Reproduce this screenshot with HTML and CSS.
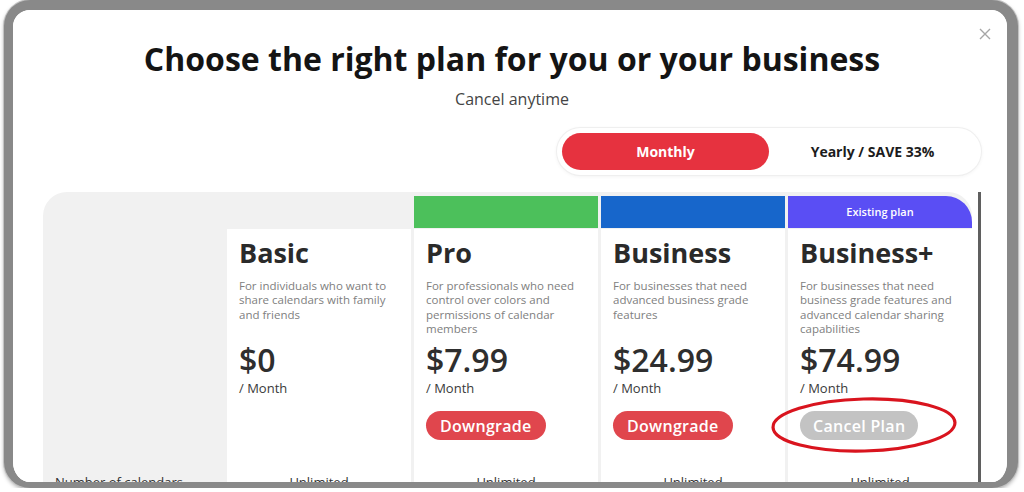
FILE: index.html
```html
<!DOCTYPE html>
<html>
<head>
<meta charset="utf-8">
<link rel="stylesheet" href="styles.css">
</head>
<body>
<div class="frame">
  <div class="modal">
    <button class="close" aria-label="Close">
      <svg width="12" height="12" viewBox="0 0 12 12"><path d="M1 1L11 11M11 1L1 11" stroke="#a6a6a6" stroke-width="1.4" fill="none"/></svg>
    </button>
    <h1 class="title">Choose the right plan for you or your business</h1>
    <p class="subtitle">Cancel anytime</p>
    <div class="toggle-row">
      <div class="toggle">
        <span class="opt active">Monthly</span>
        <span class="opt">Yearly / SAVE 33%</span>
      </div>
    </div>
    <div class="table-wrap">
      <div class="plans">
        <div class="bar"></div>
        <div class="bar"></div>
        <div class="bar green"></div>
        <div class="bar blue"></div>
        <div class="bar purple">Existing plan</div>

        <div class="label-head"></div>
        <div class="card">
          <div class="name">Basic</div>
          <div class="desc">For individuals who want to share calendars with family and friends</div>
          <div class="price">$0</div>
          <div class="per">/ Month</div>
        </div>
        <div class="card">
          <div class="name">Pro</div>
          <div class="desc">For professionals who need control over colors and permissions of calendar members</div>
          <div class="price">$7.99</div>
          <div class="per">/ Month</div>
          <button class="btn red">Downgrade</button>
        </div>
        <div class="card">
          <div class="name">Business</div>
          <div class="desc">For businesses that need advanced business grade features</div>
          <div class="price">$24.99</div>
          <div class="per">/ Month</div>
          <button class="btn red">Downgrade</button>
        </div>
        <div class="card current">
          <div class="name">Business+</div>
          <div class="desc">For businesses that need business grade features and advanced calendar sharing capabilities</div>
          <div class="price">$74.99</div>
          <div class="per">/ Month</div>
          <button class="btn grey">Cancel Plan</button>
          <svg class="mark" width="190" height="60" viewBox="0 0 190 60"><ellipse cx="94" cy="29" rx="91" ry="26" fill="none" stroke="#d9141e" stroke-width="3.2" transform="rotate(-1.5 94 29)"/></svg>
        </div>

        <div class="feat label">Number of calendars</div>
        <div class="feat">Unlimited</div>
        <div class="feat">Unlimited</div>
        <div class="feat">Unlimited</div>
        <div class="feat">Unlimited</div>
      </div>
      <div class="scroll"></div>
    </div>
  </div>
</div>
</body>
</html>
```

FILE: styles.css
```css
html, body {
  margin: 0;
  padding: 0;
  background: #ffffff;
}
body {
  font-family: "Open Sans", "Noto Sans", "Liberation Sans", sans-serif;
  color: #222;
}
.frame {
  margin-left: 4px;
  width: 1014px;
  height: 488px;
  box-sizing: border-box;
  border-style: solid;
  border-color: #898989;
  border-width: 10px 11px 6px 9px;
  border-radius: 26px;
  overflow: hidden;
  background: #ffffff;
  box-shadow: 0 0 0 1px #c2c2c2, 0 2px 4px rgba(0, 0, 0, 0.35);
}
.modal {
  position: relative;
  height: 100%;
  box-sizing: border-box;
  padding: 28.6px 26px 0 30px;
  background: #ffffff;
  border-radius: 16px 16px 0 0;
}
.close {
  position: absolute;
  top: 18px;
  right: 16px;
  border: 0;
  padding: 0;
  background: none;
  width: 12px;
  height: 12px;
  display: flex;
}
.title {
  margin: 0;
  text-align: center;
  font-size: 32px;
  line-height: 40px;
  font-weight: 700;
  color: #141414;
}
.subtitle {
  margin: 10px 0 0;
  text-align: center;
  font-size: 16px;
  line-height: 20px;
  color: #444;
}
.toggle-row {
  margin-top: 19px;
  display: flex;
  justify-content: flex-end;
}
.toggle {
  width: 424px;
  height: 47px;
  box-sizing: border-box;
  padding: 5px;
  display: flex;
  border-radius: 24px;
  background: #fff;
  box-shadow: 0 0 0 1px #efefef, 0 1px 4px rgba(0, 0, 0, 0.07);
}
.opt {
  flex: 1;
  height: 37px;
  line-height: 37px;
  text-align: center;
  font-size: 14px;
  font-weight: 700;
  color: #1c1c1c;
  border-radius: 19px;
}
.opt.active {
  background: #e6323f;
  color: #fff;
}
.table-wrap {
  margin-top: 17px;
  display: flex;
  align-items: stretch;
}
.plans {
  flex: none;
  width: 929px;
  box-sizing: border-box;
  padding-top: 4px;
  background: #f1f1f1;
  border-radius: 24px 24px 0 0;
  display: grid;
  grid-template-columns: 181px repeat(4, 184px);
  column-gap: 3px;
}
.scroll {
  flex: none;
  width: 3px;
  margin-left: 6px;
  background: #5f5f5f;
}
.bar {
  height: 32px;
  margin-bottom: 1px;
  font-size: 11px;
  line-height: 32px;
  font-weight: 600;
  text-align: center;
  color: #fff;
}
.bar.green { background: #4cc05b; }
.bar.blue { background: #1766cb; }
.bar.purple {
  background: #5a4ef4;
  border-radius: 0 26px 0 0;
}
.card {
  position: relative;
  background: #fff;
  padding: 8px 12px 32px;
}
.name {
  font-size: 27px;
  line-height: 32px;
  font-weight: 700;
  color: #2a2a2a;
}
.desc {
  margin-top: 10px;
  height: 58px;
  font-size: 11.5px;
  line-height: 14.5px;
  color: #808080;
}
.price {
  margin-top: 4.6px;
  font-size: 32px;
  line-height: 38px;
  font-weight: 600;
  color: #2e2e2e;
}
.per {
  margin-top: 1px;
  font-size: 13px;
  line-height: 16px;
  color: #3a3a3a;
}
.btn {
  display: block;
  margin-top: 15px;
  height: 29px;
  padding: 0 14px;
  border: 0;
  border-radius: 15px;
  font-family: "Open Sans", "Noto Sans", sans-serif;
  font-size: 16px;
  font-weight: 600;
  letter-spacing: 0.3px;
  color: #fff;
}
.btn.red { background: #e0464d; }
.btn.grey { background: #c3c3c3; padding: 0 13px; }
.mark {
  position: absolute;
  left: -18px;
  top: 167px;
}
.feat {
  background: #fff;
  padding: 2px 0 20px;
  font-size: 13px;
  line-height: 16px;
  text-align: center;
  color: #333;
}
.feat.label {
  background: transparent;
  text-align: left;
  padding-left: 12px;
}
```
